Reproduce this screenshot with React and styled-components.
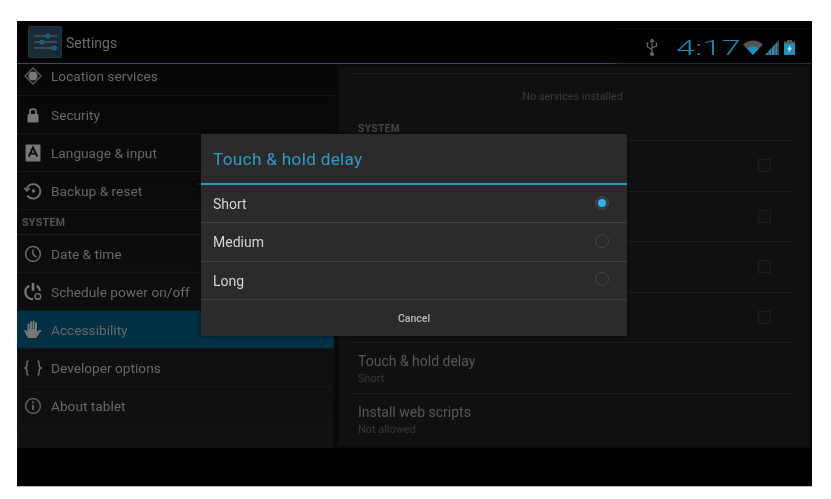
import styled, { createGlobalStyle } from "styled-components";

const GlobalStyle = createGlobalStyle`
  html, body {
    margin: 0;
    background: #fff;
  }
  body {
    font-family: Roboto, "Liberation Sans", sans-serif;
  }
`;

const Page = styled.div`
  width: 831px;
  height: 499px;
  padding: 21px 19px 13px 17px;
  box-sizing: border-box;
  overflow: hidden;
`;

const Tablet = styled.div`
  position: relative;
  width: 795px;
  height: 465px;
  background: #000;
  display: flex;
  flex-direction: column;
  box-shadow: 0 1px 0 #bbb;
`;

const ActionBar = styled.header`
  height: 43px;
  flex: none;
  display: flex;
  filter: blur(0.45px);
`;

const TitleGroup = styled.div`
  flex: 1;
  box-sizing: border-box;
  display: flex;
  align-items: center;
  padding-left: 11px;
  border-bottom: 1px solid #0f566f;
`;

const AppIcon = styled.div`
  width: 34px;
  height: 32px;
  margin-right: 4px;
`;

const AppTitle = styled.span`
  color: #6b6b6b;
  font-size: 14px;
  padding-top: 1px;
`;

const StatusArea = styled.div`
  width: 197px;
  margin-top: 7px;
  box-sizing: border-box;
  display: flex;
  align-items: center;
  padding: 3px 17px 0 31px;
  border-top: 1px solid #0c0c0c;
  border-bottom: 1px solid #0a3a4c;
`;

const Clock = styled.span`
  display: inline-block;
  width: 62px;
  margin: 0 3px 0 20px;
  color: #1e87aa;
  font-size: 20px;
  font-weight: 300;
  white-space: nowrap;
  transform: translateX(-2px) scaleX(1.72);
  transform-origin: left center;
`;

const SignalSlot = styled.span`
  display: flex;
  margin: 0 5px 0 2px;
`;

const Content = styled.main`
  height: 384px;
  flex: none;
  display: flex;
  background: #08090a;
  filter: blur(0.45px);
`;

const Sidebar = styled.nav`
  width: 317px;
  flex: none;
  background: linear-gradient(#060708, #101113);
`;

const NavRow = styled.div`
  height: 38px;
  box-sizing: border-box;
  display: flex;
  align-items: center;
  padding-left: 7px;
  color: #686868;
  font-size: 13.7px;
  border-bottom: 1px solid #131517;
  background: ${(p) => (p.$active ? "#012f43" : "transparent")};
`;

const FirstNavRow = styled(NavRow)`
  height: 32px;
  padding-bottom: 7px;
`;

const NavIcon = styled.span`
  width: 18px;
  height: 18px;
  margin-right: 9px;
  display: flex;
  align-items: center;
  justify-content: center;
`;

const NavHeader = styled.div`
  height: 25px;
  box-sizing: border-box;
  padding: 6px 0 0 5px;
  color: #565656;
  font-size: 10.5px;
  font-weight: 700;
  letter-spacing: 0.4px;
  border-bottom: 1px solid #1c1e20;
`;

const DetailPanel = styled.section`
  margin: 2px 2px 1px 4px;
  width: 472px;
  box-sizing: border-box;
  background: #0f1012;
  border: 1px solid #090a0b;
  padding: 6px 16px 0 13px;
`;

const EmptyNote = styled.div`
  height: 50px;
  padding-top: 16px;
  box-sizing: border-box;
  border-top: 1px solid #1b1c1e;
  text-align: center;
  color: #3b3b3b;
  font-size: 10.9px;
`;

const DetailHeader = styled.div`
  height: 18px;
  box-sizing: border-box;
  padding-left: 6px;
  color: #464646;
  font-size: 10.2px;
  line-height: 11px;
  font-weight: 700;
  letter-spacing: 0.4px;
  border-bottom: 1px solid #1b1c1e;
`;

const DetailRow = styled.div`
  height: 50.5px;
  box-sizing: border-box;
  padding: 10px 0 0 6px;
  display: flex;
  align-items: flex-start;
  justify-content: space-between;
  border-bottom: 1px solid ${(p) => (p.$last ? "transparent" : "#1b1c1e")};
`;

const DetailTitle = styled.div`
  color: #585858;
  font-size: 14px;
  line-height: 17px;
`;

const DetailSub = styled.div`
  color: #383838;
  font-size: 10.9px;
  line-height: 13px;
  margin-top: 2px;
`;

const CheckBox = styled.span`
  width: 13px;
  height: 13px;
  box-sizing: border-box;
  margin: 8px 22px 0 0;
  border: 1px solid #1e1f21;
  background: #111214;
`;

const BottomBar = styled.div`
  flex: 1;
  background: #000;
`;

const Dialog = styled.div`
  position: absolute;
  left: 184px;
  top: 113px;
  width: 426px;
  height: 202px;
  background: #2a2a2a;
  display: flex;
  flex-direction: column;
  box-shadow: 0 0 3px rgba(0, 0, 0, 0.7);
  filter: blur(0.4px);
`;

const DialogTitle = styled.h2`
  margin: 0;
  height: 51px;
  flex: none;
  box-sizing: border-box;
  padding: 15px 0 0 12px;
  color: #2d9cc8;
  font-size: 17.2px;
  line-height: 20px;
  font-weight: 400;
  letter-spacing: 0.3px;
  border-bottom: 2px solid #2c9ac4;
`;

const OptionRow = styled.div`
  height: 38.3px;
  flex: none;
  box-sizing: border-box;
  display: flex;
  align-items: center;
  justify-content: space-between;
  padding: 1px 18px 0 12px;
  color: #d4d4d4;
  font-size: 14px;
  border-bottom: 1px solid #3f3f3f;
`;

const Radio = styled.span`
  width: 14px;
  height: 14px;
  margin-bottom: 3px;
  box-sizing: border-box;
  border-radius: 50%;
  border: 1px solid ${(p) => (p.$on ? "#404a50" : "#484848")};
  background: ${(p) => (p.$on ? "#35393c" : "transparent")};
  display: flex;
  align-items: center;
  justify-content: center;
  &::after {
    content: "";
    display: ${(p) => (p.$on ? "block" : "none")};
    width: 8px;
    height: 8px;
    border-radius: 50%;
    background: #2eb3e6;
  }
`;

const CancelButton = styled.div`
  flex: 1;
  display: flex;
  align-items: center;
  justify-content: center;
  padding-top: 1px;
  color: #bcbcbc;
  font-size: 10.5px;
  font-weight: 500;
`;

const SettingsGlyph = () => (
  <svg width="34" height="32" viewBox="0 0 34 32">
    <rect x="0.5" y="0.5" width="33" height="31" rx="1" fill="#1c2a33" stroke="#123b4e" />
    <g stroke="#5b6b73" strokeWidth="1">
      <path d="M6 10H29M6 16H29M6 22H29" />
    </g>
    <g fill="#12506c" stroke="#1c7396">
      <circle cx="20" cy="10" r="2" />
      <circle cx="14" cy="16" r="2" />
      <circle cx="26" cy="22" r="2" />
    </g>
  </svg>
);

const UsbGlyph = () => (
  <svg width="12" height="17" viewBox="0 0 12 17" fill="none" stroke="#666" strokeWidth="1.2">
    <path d="M6 1V15M1.5 5V8L6 10.5M10.5 5V7L6 9" />
    <circle cx="6" cy="15" r="1.4" fill="#666" />
    <path d="M6 0L4.6 2.2H7.4Z" fill="#666" />
    <rect x="0.6" y="3.5" width="1.8" height="1.8" fill="#666" stroke="none" />
    <circle cx="10.5" cy="4.4" r="1" fill="#666" stroke="none" />
  </svg>
);

const WifiGlyph = () => (
  <svg width="20" height="15" viewBox="0 0 20 15">
    <path d="M0 4.5C5.5 -0.8 14.5 -0.8 20 4.5L10 15Z" fill="#555" />
    <path d="M4 8.6C7.4 5.7 12.6 5.7 16 8.6L10 15Z" fill="#1f8fb8" />
  </svg>
);

const SignalGlyph = () => (
  <svg width="14" height="15" viewBox="0 0 14 15">
    <path d="M14 0V15H0Z" fill="#444" />
    <path d="M0 15L2.5 12.3V15ZM3.5 11.2L6 8.5V15H3.5ZM7 7.4L9.5 4.8V15H7ZM10.5 3.7L12 2.2V15H10.5Z" fill="#1f8fb8" />
  </svg>
);

const BatteryGlyph = () => (
  <svg width="11" height="15" viewBox="0 0 11 15">
    <rect x="3" y="0" width="5" height="2" fill="#555" />
    <rect x="0" y="1.5" width="11" height="2.5" fill="#555" />
    <rect x="0" y="3.5" width="11" height="11.5" fill="#1f8fb8" />
    <path d="M6.5 4.5L3 9.5H5L4.3 13.5L8 7.8H5.8Z" fill="#cfe6ee" />
  </svg>
);

const LocationIcon = () => (
  <svg width="18" height="18" viewBox="0 0 18 18">
    <path d="M9 1L17 9L9 17L1 9Z" fill="none" stroke="#5a5a5a" strokeWidth="1.4" />
    <circle cx="9" cy="9" r="4.6" fill="#777" />
  </svg>
);

const LockIcon = () => (
  <svg width="14" height="16" viewBox="0 0 14 16">
    <rect x="1.5" y="7" width="11" height="8.5" rx="1" fill="#777" />
    <path d="M4 7.5V4.6C4 1.4 10 1.4 10 4.6V7.5" fill="none" stroke="#777" strokeWidth="1.8" />
  </svg>
);

const LanguageIcon = () => (
  <svg width="16" height="18" viewBox="0 0 16 18">
    <rect x="0.5" y="0.5" width="15" height="17" rx="1" fill="#777" />
    <path d="M3.8 12.5L8 3.5L12.2 12.5M5.3 9.6H10.7" fill="none" stroke="#0b0b0b" strokeWidth="1.9" />
  </svg>
);

const BackupIcon = () => (
  <svg width="18" height="18" viewBox="0 0 18 18" fill="none" stroke="#747474" strokeWidth="1.8">
    <path d="M2.6 6.5A7.2 7.2 0 1 1 3.4 13.6" />
    <path d="M0.4 5.8L2.9 8.8L5.6 6.2" />
    <circle cx="9.5" cy="9" r="1.7" fill="#747474" stroke="none" />
  </svg>
);

const ClockIcon = () => (
  <svg width="18" height="18" viewBox="0 0 18 18" fill="none" stroke="#6a6a6a" strokeWidth="1.5">
    <circle cx="9" cy="9" r="7.4" />
    <path d="M9 4.4V9.4L12.4 12.2" />
  </svg>
);

const PowerIcon = () => (
  <svg width="18" height="19" viewBox="0 0 18 19" fill="none" stroke="#787878" strokeWidth="2.3">
    <path d="M5.2 3.8A7 7 0 0 0 9 17M12.8 3.8A7 7 0 0 1 16 8.8" />
    <path d="M9 1V8.8" strokeWidth="2.6" />
    <circle cx="13.8" cy="14.4" r="2.8" strokeWidth="1.4" />
  </svg>
);

const HandIcon = () => (
  <svg width="19" height="19" viewBox="0 0 18 18">
    <path
      d="M4 17.5C2.8 14.8 1 12.5 0.4 10.5C0.1 9.4 1.4 9 2 9.8L3.4 11.5V4C3.4 2.6 5.4 2.6 5.5 4V8.5H6V1.8C6 0.4 8 0.4 8 1.8V8.5H8.5V1.3C8.5 -0.1 10.5 -0.1 10.5 1.3V8.5H11V2.8C11 1.4 13 1.4 13 2.8V11.2C13.8 10 15.2 9.2 16.9 9.6C17.8 9.8 17.8 10.7 17 11C14.8 12 14 15.5 12.4 17.5Z"
      fill="#777"
    />
  </svg>
);

const BracesIcon = () => (
  <svg width="18" height="18" viewBox="0 0 18 18" fill="none" stroke="#6a6a6a" strokeWidth="1.5">
    <path d="M4.5 2C2.6 2 3 3.5 3 5.5C3 7.5 2.8 8.4 1 9C2.8 9.6 3 10.5 3 12.5C3 14.5 2.6 16 4.5 16" />
    <path d="M13.5 2C15.4 2 15 3.5 15 5.5C15 7.5 15.2 8.4 17 9C15.2 9.6 15 10.5 15 12.5C15 14.5 15.4 16 13.5 16" />
  </svg>
);

const InfoIcon = () => (
  <svg width="18" height="18" viewBox="0 0 18 18" fill="none" stroke="#666" strokeWidth="1.3">
    <circle cx="9" cy="9" r="7.4" />
    <path d="M9 8V13" strokeWidth="1.8" />
    <circle cx="9" cy="5.3" r="1.1" fill="#666" stroke="none" />
  </svg>
);

const topItems = [
  { label: "Security", icon: <LockIcon /> },
  { label: "Language & input", icon: <LanguageIcon /> },
  { label: "Backup & reset", icon: <BackupIcon /> },
];

const systemItems = [
  { label: "Date & time", icon: <ClockIcon /> },
  { label: "Schedule power on/off", icon: <PowerIcon /> },
  { label: "Accessibility", icon: <HandIcon />, active: true },
  { label: "Developer options", icon: <BracesIcon /> },
  { label: "About tablet", icon: <InfoIcon /> },
];

const detailRows = [
  { title: "", check: true },
  { title: "", check: true },
  { title: "", check: true },
  { title: "", check: true },
  { title: "Touch & hold delay", sub: "Short" },
  { title: "Install web scripts", sub: "Not allowed", last: true },
];

function NavItem({ item }) {
  return (
    <NavRow $active={item.active}>
      <NavIcon>{item.icon}</NavIcon>
      {item.label}
    </NavRow>
  );
}

export default function App() {
  return (
    <Page>
      <GlobalStyle />
      <Tablet>
        <ActionBar>
          <TitleGroup>
            <AppIcon>
              <SettingsGlyph />
            </AppIcon>
            <AppTitle>Settings</AppTitle>
          </TitleGroup>
          <StatusArea>
            <UsbGlyph />
            <Clock>4:17</Clock>
            <WifiGlyph />
            <SignalSlot>
              <SignalGlyph />
            </SignalSlot>
            <BatteryGlyph />
          </StatusArea>
        </ActionBar>
        <Content>
          <Sidebar>
            <FirstNavRow>
              <NavIcon>
                <LocationIcon />
              </NavIcon>
              Location services
            </FirstNavRow>
            {topItems.map((item) => (
              <NavItem key={item.label} item={item} />
            ))}
            <NavHeader>SYSTEM</NavHeader>
            {systemItems.map((item) => (
              <NavItem key={item.label} item={item} />
            ))}
          </Sidebar>
          <DetailPanel>
            <EmptyNote>No services installed</EmptyNote>
            <DetailHeader>SYSTEM</DetailHeader>
            {detailRows.map((row, i) => (
              <DetailRow key={i} $last={row.last}>
                <div>
                  <DetailTitle>{row.title}</DetailTitle>
                  {row.sub && <DetailSub>{row.sub}</DetailSub>}
                </div>
                {row.check && <CheckBox />}
              </DetailRow>
            ))}
          </DetailPanel>
        </Content>
        <BottomBar />
        <Dialog>
          <DialogTitle>Touch &amp; hold delay</DialogTitle>
          <OptionRow>
            Short
            <Radio $on />
          </OptionRow>
          <OptionRow>
            Medium
            <Radio />
          </OptionRow>
          <OptionRow>
            Long
            <Radio />
          </OptionRow>
          <CancelButton>Cancel</CancelButton>
        </Dialog>
      </Tablet>
    </Page>
  );
}
